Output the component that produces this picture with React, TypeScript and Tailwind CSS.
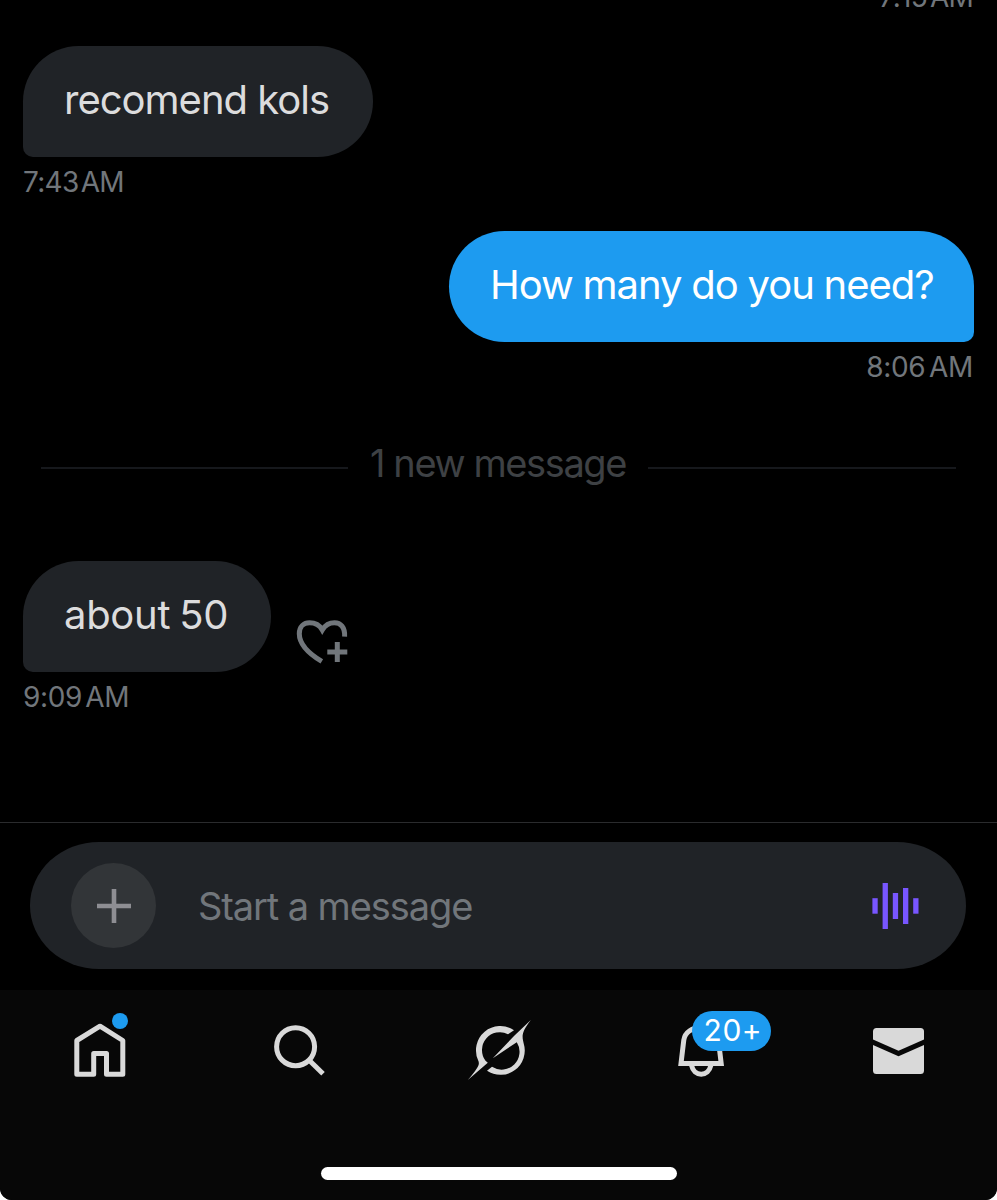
import type { ReactNode } from "react"
import clsx from "clsx"

type MessageProps = {
  text: string
  time: string
  mine?: boolean
  textClass: string
  timeClass: string
  action?: ReactNode
}

function Message({ text, time, mine, textClass, timeClass, action }: MessageProps) {
  return (
    <div className={clsx("flex flex-col", mine ? "items-end" : "items-start")}>
      <div className="flex items-end">
        <div
          className={clsx(
            "flex h-[111px] items-center rounded-[56px] whitespace-nowrap text-[40px] leading-none pb-[4px]",
            mine ? "w-[525px] rounded-br-[10px] bg-[#1d9bf0] pl-[41px] text-white" : "rounded-bl-[10px] bg-[#202327] pl-[41px] text-[#dcdcdd]",
            textClass
          )}
        >
          {text}
        </div>
        {action}
      </div>
      <span className={clsx("mt-[10px] mb-[1px] whitespace-nowrap text-[28px] leading-[30px] text-[#71767b]", timeClass)}>{time}</span>
    </div>
  )
}

function HeartPlusIcon() {
  return (
    <svg className="mb-[4px] ml-[25px] h-[50px] w-[54px]" viewBox="0 0 54 50" fill="none" stroke="#71767b" strokeWidth="5">
      <path d="M25.8 43.4C8.5 33 3.3 23.5 3.3 15.7C3.3 8.4 8 4.8 13.5 4.8C19 4.8 23.8 7.5 26.3 12C29 7.5 33 4.8 38.5 4.8C44.5 4.8 49.2 9 48.6 18.7" />
      <path d="M41.3 24v20M31.3 34h20" />
    </svg>
  )
}

function VoiceIcon() {
  return (
    <svg className="h-[46px] w-[48px]" viewBox="0 0 48 46" fill="#7856ff">
      <rect x="0.4" y="15.2" width="5.3" height="15.5" />
      <rect x="10.6" y="0" width="5.3" height="46" />
      <rect x="20.8" y="10" width="5.3" height="26" />
      <rect x="31" y="5" width="5.3" height="36" />
      <rect x="41.2" y="15.2" width="5.3" height="15.5" />
    </svg>
  )
}

function HomeIcon() {
  return (
    <svg className="size-[70px]" viewBox="0 0 70 70" fill="none" stroke="#d9d9d9" strokeWidth="5" strokeLinejoin="round">
      <path d="M11.8 25.5L35 11.2L57.8 25.5V59.2H41.5V38.5H28.7V59.2H11.8Z" />
    </svg>
  )
}

function SearchIcon() {
  return (
    <svg className="size-[70px]" viewBox="0 0 70 70" fill="none" stroke="#d9d9d9" strokeWidth="5">
      <circle cx="31.6" cy="31.7" r="19" />
      <path d="M45.2 45.2L59 58.8" />
    </svg>
  )
}

function GrokIcon() {
  return (
    <svg className="size-[70px]" viewBox="0 0 70 70" fill="#d9d9d9">
      <path d="M51 15.3A24.3 24.3 0 0 0 15.2 45.5C17 49.5 15.5 52 4.8 65L24.8 47.8L22.5 45.8A17.9 17.9 0 0 1 45 19.2Z" />
      <path d="M67.8 5C57.5 18.5 59.3 21.5 60.7 28.5A24.3 24.3 0 0 1 24 55.8L29 51.8A17.9 17.9 0 0 0 53.8 27.2L29.8 43.3L51.5 20.5Z" />
    </svg>
  )
}

function BellIcon() {
  return (
    <svg className="size-[70px]" viewBox="0 0 70 70" fill="none" stroke="#d9d9d9" strokeWidth="5">
      <path d="M18 48.5L20.8 25C22 17 29.5 12.5 38.1 12.5C46.7 12.5 54.3 17 55.4 25L58.2 48.5Z" />
      <path d="M28.6 50.5C29.8 56 33.5 59.2 38.2 59.2S46.6 56 47.8 50.5" />
    </svg>
  )
}

function MailIcon() {
  return (
    <svg className="size-[70px]" viewBox="0 0 70 70" fill="#d9d9d9">
      <path d="M11 24.5V16.5Q11 13 14.5 13H58.5Q62 13 62 16.5V24.5L36.5 35.7Z" />
      <path d="M11 30L36.5 41.3L62 30V55.5Q62 59 58.5 59H14.5Q11 59 11 55.5Z" />
    </svg>
  )
}

export default function App() {
  return (
    <div className="h-[1200px] w-[997px] overflow-hidden bg-white font-['Inter','Liberation_Sans',sans-serif]">
      <div className="flex h-full flex-col overflow-hidden rounded-b-[12px] bg-black">
        {/* Conversation */}
        <main className="flex h-[822px] shrink-0 flex-col overflow-hidden px-[23px]">
          <div className="-mt-[18px] mb-[34px] self-end pr-[1px] text-[28px] leading-[30px] tracking-[-0.8px] [word-spacing:-4px] text-[#71767b]">7:15 AM</div>
          <Message text="recomend kols" time="7:43 AM" textClass="w-[350px] tracking-[-1px]" timeClass="tracking-[-0.7px] [word-spacing:-5px]" />
          <div className="mt-[33px]">
            <Message mine text="How many do you need?" time="8:06 AM" textClass="tracking-[-1px] [word-spacing:-0.5px]" timeClass="tracking-[-0.3px] [word-spacing:-4px] pr-[1px]" />
          </div>

          <div className="mx-[18px] mt-[60px] flex h-[48px] items-center">
            <div className="mt-[2px] h-[2px] w-[307px] bg-[#16181c]" />
            <span className="flex-1 whitespace-nowrap pb-[8px] text-center text-[38px] leading-none tracking-[-1.4px] text-[#3e4144]">1 new message</span>
            <div className="mt-[2px] h-[2px] w-[308px] bg-[#16181c]" />
          </div>

          <div className="mt-[70px]">
            <Message text="about 50" time="9:09 AM" textClass="w-[248px] tracking-[-0.3px] [word-spacing:-2px]" timeClass="tracking-[-0.4px] [word-spacing:-4px]" action={<HeartPlusIcon />} />
          </div>
        </main>

        {/* Composer */}
        <div className="h-[168px] shrink-0 border-t border-[#2a2b2d] pt-[19px] pr-[31px] pl-[30px]">
          <div className="flex h-[127px] items-center rounded-[69px/63.5px] bg-[#202327] pr-[46px] pl-[41px]">
            <div className="flex size-[85px] items-center justify-center rounded-full bg-[#323538]">
              <svg className="size-[34px]" viewBox="0 0 34 34" stroke="#8e8e93" strokeWidth="4.6">
                <path d="M17 0v34M0 17h34" />
              </svg>
            </div>
            <span className="ml-[42px] flex-1 whitespace-nowrap text-[38px] leading-none tracking-[-1.1px] text-[#71767b]">Start a message</span>
            <VoiceIcon />
          </div>
        </div>

        {/* Tab bar */}
        <nav className="flex flex-1 flex-col items-center bg-[#070707] pt-[25px]">
          <div className="grid w-full grid-cols-5 justify-items-center">
            <div className="relative">
              <HomeIcon />
              <span className="absolute top-[-2px] left-[47px] size-[16px] rounded-full bg-[#1d9bf0]" />
            </div>
            <SearchIcon />
            <GrokIcon />
            <div className="relative">
              <BellIcon />
              <span className="absolute top-[-4px] left-[29px] flex h-[40px] w-[79px] items-center justify-center rounded-full bg-[#1d9bf0] pb-[2px] pl-[3px] text-[30px] leading-none tracking-[0.5px] text-white">20+</span>
            </div>
            <MailIcon />
          </div>
          <div className="mt-[82px] h-[13px] w-[356px] rounded-full bg-white" />
        </nav>
      </div>
    </div>
  )
}
